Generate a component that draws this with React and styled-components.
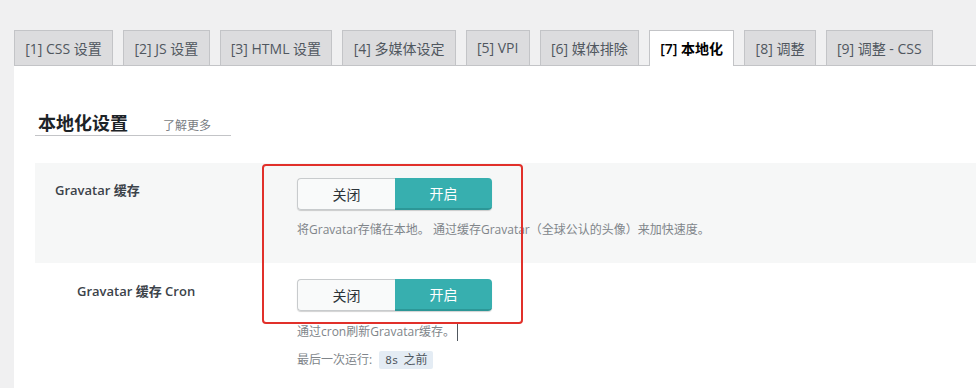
import React from "react";
import styled, { createGlobalStyle } from "styled-components";

const Global = createGlobalStyle`
  html, body { margin: 0; padding: 0; background: #f0f0f1; }
  body { font-family: "Open Sans", "Noto Sans CJK SC", sans-serif; overflow: hidden; }
  * { box-sizing: border-box; }
`;

const Page = styled.div`
  width: 976px;
  height: 388px;
  padding-top: 30px;
  overflow: hidden;
`;

const TabBar = styled.nav`
  display: flex;
  align-items: flex-end;
  gap: 10px;
  padding-left: 14px;
  position: relative;
  z-index: 1;
`;

const Tab = styled.div`
  height: ${(p) => (p.$active ? "36px" : "35px")};
  margin-bottom: ${(p) => (p.$active ? "-1px" : "0")};
  padding: 0 10.25px 1px;
  display: flex;
  align-items: center;
  border: 1px solid #c3c4c7;
  border-bottom: none;
  background: ${(p) => (p.$active ? "#fff" : "#dcdcde")};
  color: ${(p) => (p.$active ? "#000" : "#50575e")};
  font-size: 14px;
  font-weight: ${(p) => (p.$active ? 600 : 400)};
  white-space: nowrap;
`;

const Panel = styled.section`
  position: relative;
  margin-left: 14px;
  background: #fff;
  border-top: 1px solid #c3c4c7;
  height: 400px;
  padding-left: 21px;
`;

const Heading = styled.div`
  margin-top: 45px;
  width: 196px;
  padding-left: 3px;
  display: flex;
  align-items: baseline;
  border-bottom: 1px solid #c3c4c7;
`;

const Title = styled.h2`
  margin: 0;
  font-size: 18px;
  line-height: 24px;
  font-weight: 700;
  color: #1d2327;
`;

const More = styled.span`
  margin-left: 35px;
  font-size: 12px;
  color: #787c82;
`;

const Rows = styled.div`
  margin-top: 27px;
`;

const Row = styled.div`
  display: flex;
  background: ${(p) => (p.$shaded ? "#f6f7f7" : "#fff")};
  padding: ${(p) => (p.$shaded ? "15px 0 24px" : "16px 0 20px")};
`;

const Label = styled.div`
  width: 262px;
  flex: none;
  padding-left: ${(p) => p.$indent}px;
  padding-top: 2px;
  font-size: 13px;
  line-height: 20px;
  font-weight: 600;
  color: #3c434a;
`;

const Control = styled.div`
  display: flex;
  flex-direction: column;
  align-items: flex-start;
`;

const Switch = styled.div`
  display: flex;
  width: 195px;
  height: 32px;
  border-radius: 4px;
  box-shadow: 0 1px 1px rgba(0, 0, 0, 0.18);
`;

const SwitchOption = styled.div`
  flex: 1;
  display: flex;
  align-items: center;
  justify-content: center;
  font-size: 14px;
  ${(p) =>
    p.$on
      ? `background: #37afaf; color: #fff; border-radius: 0 4px 4px 0; border-bottom: 2px solid #2c9797;`
      : `background: #f9fafa; color: #2c3338; border: 1px solid #c8cbcd; border-right: none; border-radius: 4px 0 0 4px;`}
`;

const Desc = styled.div`
  margin-top: ${(p) => p.$gap}px;
  font-size: 12px;
  line-height: 18px;
  color: #80858a;
  display: flex;
  align-items: center;
`;

const Caret = styled.span`
  display: inline-block;
  width: 1px;
  height: 17px;
  margin-left: 2px;
  background: #50575e;
`;

const Badge = styled.span`
  margin-left: 7px;
  padding: 0 6px;
  height: 18px;
  line-height: 18px;
  background: #e4ecf4;
  border-radius: 2px;
  color: #50575e;
  font-size: 12px;
`;

const Mono = styled.span`
  font-family: "DejaVu Sans Mono", monospace;
  font-size: 11px;
  margin-right: 5px;
`;

const Highlight = styled.div`
  position: absolute;
  left: 248px;
  top: 98px;
  width: 261px;
  height: 160px;
  border: 2.5px solid #e1302a;
  border-radius: 4px;
  pointer-events: none;
`;

const tabs = [
  "[1] CSS 设置",
  "[2] JS 设置",
  "[3] HTML 设置",
  "[4] 多媒体设定",
  "[5] VPI",
  "[6] 媒体排除",
  "[7] 本地化",
  "[8] 调整",
  "[9] 调整 - CSS",
];

function Toggle() {
  return (
    <Switch>
      <SwitchOption>关闭</SwitchOption>
      <SwitchOption $on>开启</SwitchOption>
    </Switch>
  );
}

export default function App() {
  return (
    <>
      <Global />
      <Page>
        <TabBar>
          {tabs.map((t, i) => (
            <Tab key={t} $active={i === 6}>
              {t}
            </Tab>
          ))}
        </TabBar>
        <Panel>
          <Heading>
            <Title>本地化设置</Title>
            <More>了解更多</More>
          </Heading>
          <Rows>
            <Row $shaded>
              <Label $indent={20}>Gravatar 缓存</Label>
              <Control>
                <Toggle />
                <Desc $gap={11}>
                  将Gravatar存储在本地。 通过缓存Gravatar（全球公认的头像）来加快速度。
                </Desc>
              </Control>
            </Row>
            <Row>
              <Label $indent={42}>Gravatar 缓存 Cron</Label>
              <Control>
                <Toggle />
                <Desc $gap={12}>
                  通过cron刷新Gravatar缓存。
                  <Caret />
                </Desc>
                <Desc $gap={10}>
                  最后一次运行:
                  <Badge>
                    <Mono>8s</Mono>之前
                  </Badge>
                </Desc>
              </Control>
            </Row>
          </Rows>
          <Highlight />
        </Panel>
      </Page>
    </>
  );
}
